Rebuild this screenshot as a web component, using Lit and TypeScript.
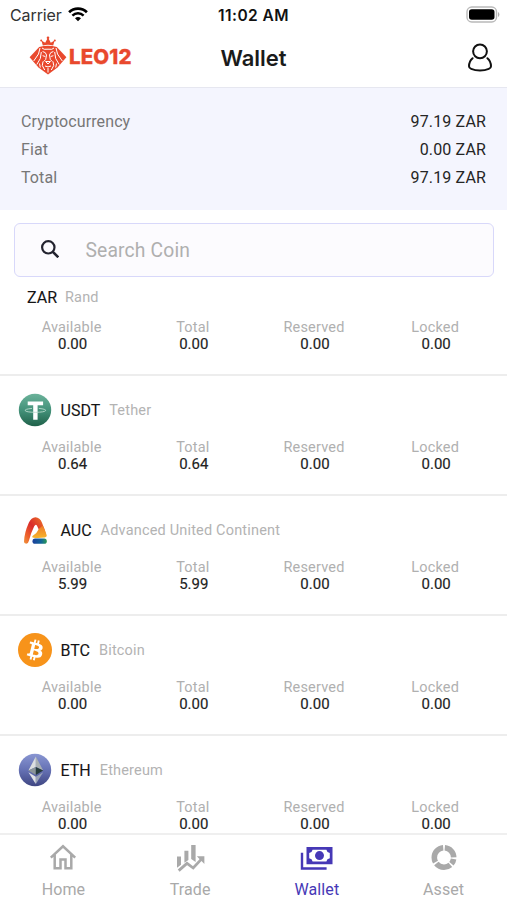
import { LitElement, html, css, svg, nothing, TemplateResult } from "lit";
import { customElement, property } from "lit/decorators.js";
import { classMap } from "lit/directives/class-map.js";

interface Coin {
  code: string;
  name: string;
  amounts: string[];
  icon?: TemplateResult;
}

const wifiIcon = html`<svg class="wifi" width="20" height="15" viewBox="0 0 20 15" fill="none" stroke="#000">
  <path d="M1.1 5.3a12.8 12.8 0 0 1 17.8 0" stroke-width="2.7" />
  <path d="M4.4 8.6a8.1 8.1 0 0 1 11.2 0" stroke-width="2.5" />
  <path d="M10 14.2 7 11.3a4.4 4.4 0 0 1 6 0z" fill="#000" stroke="none" />
</svg>`;

const batteryIcon = html`<svg class="battery" width="34" height="17" viewBox="0 0 34 17">
  <rect x="1" y="1" width="29.5" height="15" rx="4.8" fill="#fff" stroke="#b9b9b9" stroke-width="1.4" />
  <rect x="3" y="3.2" width="25.5" height="10.6" rx="2.8" fill="#000" />
  <path d="M32 6v5q1.4-.8 1.4-2.5T32 6z" fill="#b0b0b0" />
</svg>`;

const lionLogo = html`<svg class="lion" width="38" height="39" viewBox="0 0 38 39">
  <g fill="#e9492d">
    <path d="M13.800 9.400 12.400 4.600l3.800 2.200L19 1.500l2.800 5.300 3.800-2.200-1.400 4.800q-5.200-1.300-10.400 0z" />
    <circle cx="19" cy="1.700" r="1.300" />
    <circle cx="12.200" cy="4.400" r="1" />
    <circle cx="25.800" cy="4.400" r="1" />
    <path d="M10.200 10.900Q19 8.600 27.800 10.900L37.400 21.200 28.500 31.500 19 38.400 9.500 31.500.6 21.200z" />
  </g>
  <g fill="none" stroke="#fff" stroke-width="1">
    <path d="M13 12q1.500 2 6 1.200Q23.500 14 25 12M11 12l-1.500 6-4.800 7M27 12l1.500 6 4.800 7M12.300 16l-1 6.500-3.500 6M25.700 16l1 6.500 3.500 6" />
    <path d="M13.600 15.500q3.400.5 3.900 3.500l-.8 4.500-2 2M24.400 15.500q-3.400.5-3.900 3.500l.8 4.500 2 2M13.600 19.700l2.700.8M24.400 19.700l-2.700.8" />
    <path d="M16.600 25.500h4.800L19 28zM14 25.500l-.7 4 2.400 4.500M24 25.500l.7 4-2.400 4.500M16 30q3 1.800 6 0M19 32v4.500M10.500 27.500l.8 4M27.500 27.500l-.8 4" />
  </g>
</svg>`;

const personIcon = html`<svg class="person" width="26" height="29" viewBox="0 0 26 29" fill="none" stroke="#111" stroke-width="2" stroke-linecap="round">
  <circle cx="13" cy="8.300" r="6.900" />
  <path d="M5.600 15.200C3.200 17.300 2 20.300 2 23.200q0 1.800 2.200 2.700Q8 27.600 13 27.600t8.800-1.700Q24 25 24 23.200c0-2.900-1.200-5.900-3.600-8" />
</svg>`;

const searchIcon = html`<svg class="glass" width="18" height="18" viewBox="0 0 18 18" fill="none" stroke="#23232f" stroke-width="2.200">
  <circle cx="7.300" cy="7.300" r="6.200" />
  <path d="m11.600 11.600 5.700 5.700" stroke-width="2.600" />
</svg>`;

const tetherIcon = html`<svg width="34" height="34" viewBox="0 0 34 34">
  <defs><linearGradient id="g" x1="0" y1="0" x2="0" y2="1"><stop offset="0" stop-color="#6bb29a" /><stop offset=".5" stop-color="#44927a" /><stop offset="1" stop-color="#1f6149" /></linearGradient></defs>
  <circle cx="17" cy="17" r="16.200" fill="url(#g)" />
  <path d="M9.700 8.400h15.400v3.800h-5.500v14.600h-4.400V12.200H9.700z" fill="#fff" />
  <path d="M14 15.400q-7.500.7-6.800 2.200.8 1.600 10.200 1.700 9.400-.1 10.200-1.700.7-1.500-6.800-2.200" fill="none" stroke="#b9dacd" stroke-width=".9" />
</svg>`;

const aucIcon = html`<svg width="34" height="34" viewBox="0 0 34 34">
  <defs>
    <linearGradient id="a" x1="0" y1="1" x2=".9" y2=".2"><stop offset="0" stop-color="#f0953c" /><stop offset=".3" stop-color="#ec5a2b" /><stop offset=".6" stop-color="#d92b2c" /><stop offset="1" stop-color="#ea6a28" /></linearGradient>
    <linearGradient id="b" x1="0" y1="0" x2="1" y2="0"><stop offset="0" stop-color="#1b3f9b" /><stop offset=".6" stop-color="#12659a" /><stop offset="1" stop-color="#2b9a55" /></linearGradient>
    <linearGradient id="c" x1="0" y1="0" x2="0" y2="1"><stop offset="0" stop-color="#ee7a28" /><stop offset="1" stop-color="#f6b42c" /></linearGradient>
  </defs>
  <path d="M6 28.500Q6.400 19.500 10.800 9.800 13.200 4.600 17.500 4.300q4.400.2 6.400 5.200 3 7 4.400 13l-5.300-1.200-4-8.500q-1.200-2.300-2.800.5-3.500 7-5.300 14.500-.5 2.900-2.700 3-2.400-.2-2.200-2.300z" fill="url(#a)" />
  <path d="M14.500 22.900q4.400-2.300 6.500-7.200l3.800-3.200q2.700 5 3.900 9.800.3 2-2 2.200-6 .7-11.200.2-2.100-.4-1-1.800z" fill="url(#c)" />
  <rect x="14.500" y="25.600" width="14.300" height="5.200" rx="2.600" fill="url(#b)" />
</svg>`;

const bitcoinIcon = html`<svg width="34" height="34" viewBox="0 0 32 32">
  <circle cx="16" cy="16" r="16" fill="#f7931a" />
  <path fill="#fff" d="M23.189 14.020c.314-2.096-1.283-3.223-3.465-3.975l.708-2.840-1.728-.430-.690 2.765c-.454-.114-.920-.220-1.385-.326l.695-2.783L15.596 6l-.708 2.839c-.376-.086-.746-.170-1.104-.260l.002-.009-2.384-.595-.460 1.846s1.283.294 1.256.312c.700.175.826.638.805 1.006l-.806 3.235c.048.012.110.030.180.057l-.183-.045-1.130 4.532c-.086.212-.303.531-.793.410.018.025-1.256-.313-1.256-.313l-.858 1.978 2.250.561c.418.105.828.215 1.231.318l-.715 2.872 1.727.430.708-2.840c.472.127.930.245 1.378.357l-.706 2.828 1.728.430.715-2.866c2.948.558 5.164.333 6.097-2.333.752-2.146-.037-3.385-1.588-4.192 1.130-.260 1.980-1.003 2.207-2.538zm-3.950 5.538c-.533 2.147-4.148.986-5.320.695l.950-3.805c1.172.293 4.929.872 4.370 3.110zm.535-5.569c-.487 1.953-3.495.960-4.470.717l.860-3.450c.975.243 4.118.696 3.610 2.733z" />
</svg>`;

const etherIcon = html`<svg width="34" height="34" viewBox="0 0 34 34">
  <defs><linearGradient id="e" x1="0" y1="0" x2="0" y2="1"><stop offset="0" stop-color="#8996d2" /><stop offset=".5" stop-color="#6571b4" /><stop offset="1" stop-color="#3f4682" /></linearGradient></defs>
  <circle cx="17" cy="17" r="16.200" fill="url(#e)" />
  <path d="M17.800 3.500V14L10.400 17.600z" fill="#dcdfdf" />
  <path d="M17.800 3.500V14l7.400 3.600z" fill="#a9b0b3" />
  <path d="M17.800 14v8L10.400 17.600z" fill="#8b9598" />
  <path d="M17.800 14v8l7.400-4.400z" fill="#263c3c" />
  <path d="M10.400 19.300l7.400 4.400v7.300z" fill="#e0e3e5" />
  <path d="M25.200 19.300l-7.400 4.400v7.300z" fill="#9aa3b6" />
</svg>`;

const homeIcon = svg`<path d="M1.800 14.600 14 3.300l12.200 11.300M5.700 11.500v13.700h5.800v-8.700h5v8.700h5.800V11.500" fill="none" stroke="currentColor" stroke-width="2.500"/>`;

const tradeIcon = svg`<g fill="currentColor">
  <path d="M1 13.400h4v8.400l-4 3zM8.400 7.800h4V17L8.400 19.800zM15.200 2h4.400v17L15.200 16z"/>
  <path d="m2.700 27.600 8.300-7.200 6.200 4.600 8-8.600" fill="none" stroke="currentColor" stroke-width="2.800"/>
  <path d="M20.800 13.300h7.600v7.600z"/>
</g>`;

const walletIcon = svg`<g fill="currentColor" fill-rule="evenodd">
  <path d="M6.500 4h26v17.200h-26zM12.600 6.700q-.4 2.700-3.400 3.300v5.200q3 .6 3.400 3.300h13.800q.4-2.700 3.400-3.300V10q-3-.6-3.400-3.300z"/>
  <circle cx="19.500" cy="12.600" r="4.500"/>
  <path d="M.8 9.800h2.400v14.400h23.400v2.500H.8z"/>
</g>`;

const assetIcon = svg`<g fill="none" stroke="currentColor" stroke-width="5.600" transform="rotate(-90 14 14.500)">
  <circle cx="14" cy="14.500" r="9.700" pathLength="360" stroke-dasharray="84 276" stroke-dashoffset="-5"/>
  <circle cx="14" cy="14.500" r="9.700" pathLength="360" stroke-dasharray="31 329" stroke-dashoffset="-99"/>
  <circle cx="14" cy="14.500" r="9.700" pathLength="360" stroke-dasharray="93 267" stroke-dashoffset="-139"/>
  <circle cx="14" cy="14.500" r="9.700" pathLength="360" stroke-dasharray="114 246" stroke-dashoffset="-241"/>
</g>`;

const columns = ["Available", "Total", "Reserved", "Locked"];

const coins: Coin[] = [
  { code: "ZAR", name: "Rand", amounts: ["0.00", "0.00", "0.00", "0.00"] },
  { code: "USDT", name: "Tether", amounts: ["0.64", "0.64", "0.00", "0.00"], icon: tetherIcon },
  { code: "AUC", name: "Advanced United Continent", amounts: ["5.99", "5.99", "0.00", "0.00"], icon: aucIcon },
  { code: "BTC", name: "Bitcoin", amounts: ["0.00", "0.00", "0.00", "0.00"], icon: bitcoinIcon },
  { code: "ETH", name: "Ethereum", amounts: ["0.00", "0.00", "0.00", "0.00"], icon: etherIcon },
];

@customElement("coin-row")
class CoinRow extends LitElement {
  @property({ attribute: false }) coin!: Coin;

  static styles = css`
    :host { display: block; flex: none; }
    .row { box-sizing: border-box; height: 120px; padding: 17px 11px 0; border-bottom: 2px solid #ededed; }
    .row.plain { height: 99px; padding-top: 3px; }
    .title { display: flex; align-items: center; height: 34px; padding-left: 7px; white-space: nowrap; }
    .plain .title { padding-left: 16px; }
    .icon { display: flex; margin: -1px 8.500px 0 0; }
    .code { font-size: 16px; color: #151515; -webkit-text-stroke: .1px #151515; }
    .name { font-size: 14.5px; color: #b3b3b3; margin-left: 9px; letter-spacing: .18px; }
    .plain .name { margin-left: 8px; }
    .cols { display: grid; grid-template-columns: repeat(4, 121.2px); margin-top: 12px; text-align: center; }
    .plain .cols { margin-top: 5px; }
    .label { font-size: 14.5px; line-height: 18px; color: #b0b0b0; letter-spacing: .18px; }
    .value { font-size: 15px; line-height: 17px; color: #222; margin-top: -1px; padding-left: 2px; -webkit-text-stroke: .15px #222; }
  `;

  render() {
    const { code, name, amounts, icon } = this.coin;
    return html`<div class=${classMap({ row: true, plain: !icon })}>
      <div class="title">
        ${icon ? html`<span class="icon">${icon}</span>` : nothing}
        <span class="code">${code}</span><span class="name">${name}</span>
      </div>
      <div class="cols">
        ${columns.map((c, i) => html`<div><div class="label">${c}</div><div class="value">${amounts[i]}</div></div>`)}
      </div>
    </div>`;
  }
}

@customElement("app-root")
class AppRoot extends LitElement {
  static styles = css`
    :host { display: flex; flex-direction: column; height: 900px; overflow: hidden; background: #fff; font-family: Roboto, sans-serif; color: #1a1a1a; }
    .status { flex: none; display: grid; grid-template-columns: 1fr auto 1fr; align-items: center; height: 30px; padding: 0 8px 0 8px; box-sizing: border-box; font-family: Inter, sans-serif; font-size: 16px; }
    .carrier { display: flex; align-items: center; color: #333; padding-left: 2px; }
    .carrier-name { letter-spacing: -.1px; }
    .wifi { margin: -2px 0 0 6px; }
    .time { font-weight: 600; color: #111; font-size: 15.5px; letter-spacing: .45px; }
    .battery { justify-self: end; margin: -2px -1px 0 0; }
    .header { flex: none; display: grid; grid-template-columns: 1fr auto 1fr; align-items: center; height: 58px; padding: 0 14px; box-sizing: border-box; border-bottom: 1px solid #e6e7f0; }
    .brand { display: flex; align-items: center; padding-left: 15px; }
    .lion { margin-top: -7px; }
    .brand-name { font-family: Inter, sans-serif; font-weight: 800; font-size: 20.500px; letter-spacing: .1px; color: #e9492d; margin: -4px 0 0 2px; -webkit-text-stroke: .3px #e9492d; }
    .title { font-family: Inter, sans-serif; font-weight: 600; font-size: 22px; color: #1b1b1b; margin-top: -2px; }
    .person { justify-self: end; margin-top: -2px; }
    .summary { flex: none; box-sizing: border-box; height: 122px; padding: 20px 21px 0; background: #f4f5fe; }
    .line { display: flex; justify-content: space-between; font-size: 16px; line-height: 27.800px; }
    .line-label { color: #777; letter-spacing: .1px; }
    .line-value { color: #252525; letter-spacing: .15px; }
    .search { flex: none; display: flex; align-items: center; box-sizing: border-box; height: 54px; margin: 13px 13px 0 14px; padding-left: 25.500px; border: 1px solid #d8d8fa; border-radius: 6px; background: #fcfbfe; }
    .placeholder { margin-left: 27px; font-size: 19.300px; color: #afafaf; letter-spacing: .15px; }
    .glass { margin-top: -2px; }
    .list { flex: 1; min-height: 0; display: flex; flex-direction: column; overflow: hidden; }
    .tabs { flex: none; display: grid; grid-template-columns: repeat(4, 1fr); height: 67px; box-sizing: border-box; border-top: 2px solid #efefef; background: #fff; }
    .tab { display: flex; flex-direction: column; align-items: center; color: #a9a9a9; font-size: 16px; }
    .tab.active { color: #4638b6; }
    .tab-icon { display: flex; align-items: center; height: 30px; margin-top: 7px; }
    .tab-label { margin-top: 8px; line-height: 20px; letter-spacing: .1px; }
  `;

  private tab(label: string, icon: unknown, w: number, active = false) {
    return html`<div class=${classMap({ tab: true, active })}>
      <span class="tab-icon"><svg width=${w} height="29" viewBox="0 0 ${w} 29">${icon}</svg></span>
      <span class="tab-label">${label}</span>
    </div>`;
  }

  render() {
    const totals = [["Cryptocurrency", "97.19 ZAR"], ["Fiat", "0.00 ZAR"], ["Total", "97.19 ZAR"]];
    return html`
      <div class="status">
        <div class="carrier"><span class="carrier-name">Carrier</span>${wifiIcon}</div>
        <div class="time">11:02 AM</div>
        ${batteryIcon}
      </div>
      <div class="header">
        <div class="brand">${lionLogo}<span class="brand-name">LEO12</span></div>
        <div class="title">Wallet</div>
        ${personIcon}
      </div>
      <div class="summary">
        ${totals.map(([l, v]) => html`<div class="line"><span class="line-label">${l}</span><span class="line-value">${v}</span></div>`)}
      </div>
      <div class="search">${searchIcon}<span class="placeholder">Search Coin</span></div>
      <div class="list">${coins.map((c) => html`<coin-row .coin=${c}></coin-row>`)}</div>
      <div class="tabs">
        ${this.tab("Home", homeIcon, 28)}
        ${this.tab("Trade", tradeIcon, 29)}
        ${this.tab("Wallet", walletIcon, 33, true)}
        ${this.tab("Asset", assetIcon, 28)}
      </div>
    `;
  }
}
